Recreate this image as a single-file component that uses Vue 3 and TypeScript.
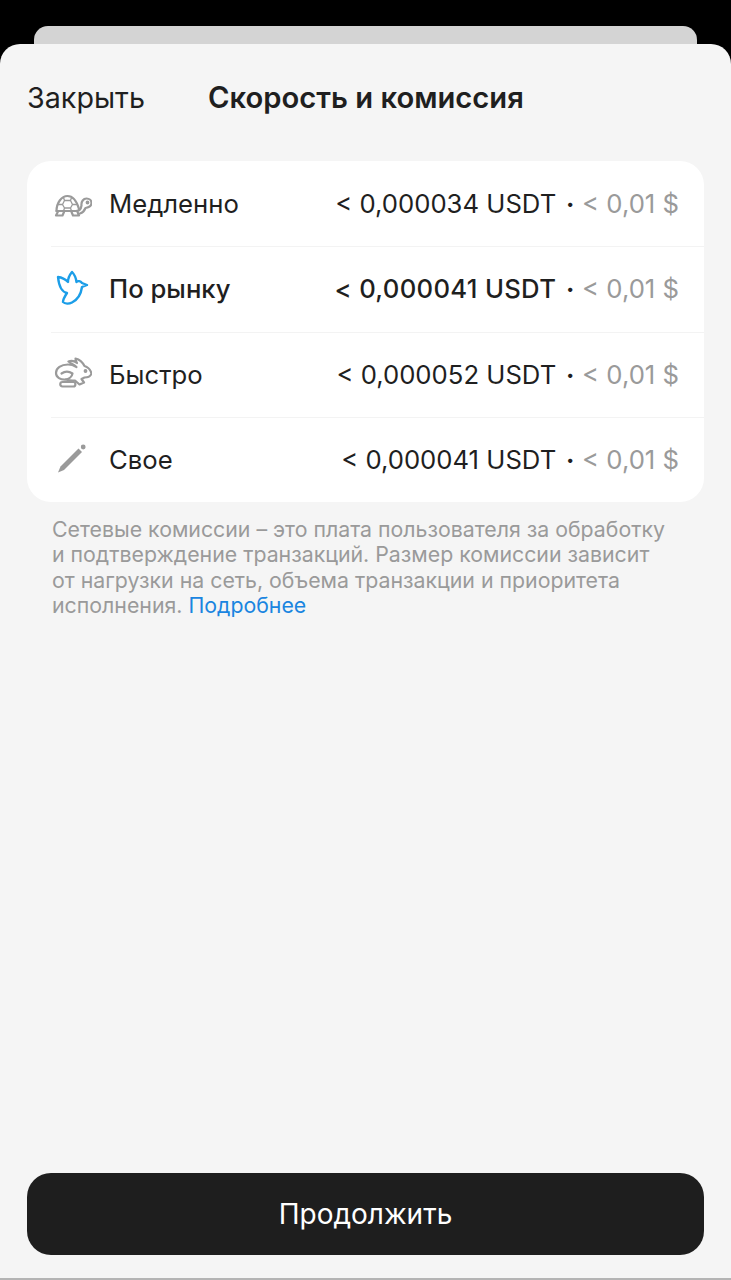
<script setup lang="ts">
type SpeedRow = {
	name: string;
	fee: string;
	icon: 'turtle' | 'bird' | 'rabbit' | 'pencil';
	active?: boolean;
};

const rows: SpeedRow[] = [
	{ name: 'Медленно', fee: '< 0,000034 USDT', icon: 'turtle' },
	{ name: 'По рынку', fee: '< 0,000041 USDT', icon: 'bird', active: true },
	{ name: 'Быстро', fee: '< 0,000052 USDT', icon: 'rabbit' },
	{ name: 'Свое', fee: '< 0,000041 USDT', icon: 'pencil' },
];
</script>

<template>
	<div class="screen">
		<div class="backCard" />
		<main class="sheet">
			<header class="header">
				<span class="close">Закрыть</span>
				<h1 class="title">Скорость и комиссия</h1>
			</header>

			<section class="card">
				<div v-for="row in rows" :key="row.name" class="row" :class="{ active: row.active }">
					<svg class="icon" viewBox="0 0 40 40" fill="none" stroke="#9a9a9a" stroke-width="2.200" stroke-linecap="round" stroke-linejoin="round">
						<template v-if="row.icon === 'turtle'">
							<path d="M4.500 27C4.500 19 9.500 12 15.500 12C21 12 25 18 27 25" />
							<path d="M4.500 27H24C27 27 29 25 29.500 21.500C29 17.500 31.500 14.500 34.500 14.500C37.500 14.500 39.500 16.500 39.500 19C39.500 22 36.500 23.500 33.500 24C32.500 26.500 31 28.500 28 29.500" />
							<path d="M10.500 20.500L12.500 16.500H18.500L20.500 20.500L18.500 24H12.500ZM12.500 16.500L11.500 13.500M18.500 16.500L19.500 13.500M10.500 20.500H6M20.500 20.500H25M12.500 24L11.500 27M18.500 24L19.500 27" stroke-width="1.300" />
							<path d="M6 27.500L4 31.500H10.500L12 28M19.500 28L21 31.500H27L25.500 28" />
							<circle cx="35.500" cy="18.500" r=".8" fill="#9a9a9a" />
						</template>
						<template v-else-if="row.icon === 'bird'">
							<path
								d="M11 33C11 30 13 27 15 24C10 23 7 18 6 8C10 8.500 13 10 16 13C16 9 17.500 6 20 3C22.500 5.500 24 9 24.500 13C26 11.500 28.500 12 30 14L35 16L30 18C29 25 25 31 20 33.500C17 35 13 35 11 33Z"
								stroke="#1c9ee8"
								stroke-width="2.400"
							/>
						</template>
						<template v-else-if="row.icon === 'rabbit'">
							<path d="M4 19C4 14 9 10.500 16 10.500C19 10.500 22 11.500 24.500 13C22 11 19 9.500 16.500 7.500C19 6.500 22.500 7 25 9C24 7.500 23.500 5.500 23.500 4.500C27.500 5.500 31 9 32.500 12C36 13 38.500 16 39.500 19.500C38.500 22.500 35.500 23.500 32.500 23.500L29.500 25L32 28.500L27.500 30.500L23 26.500C20 27 17 26.500 14 25.500" />
							<path d="M4 19C4 23.500 8.500 26 14 25.500C17 25 20 22.500 20.500 19.500C16.500 17 12.500 17.500 9.500 19.500" />
							<path d="M10.500 28H21.500C24 28 24 32.500 21.500 32.500H10.500C7.500 32.500 7.500 28 10.500 28Z" />
							<circle cx="33.500" cy="17" r=".8" fill="#9a9a9a" />
						</template>
						<template v-else>
							<path d="M6 33.500L8.500 27.500L26.500 9.500L30 13L12 31Z" fill="#9a9a9a" stroke="none" />
							<circle cx="31.200" cy="8" r="2.400" fill="#9a9a9a" stroke="none" />
						</template>
					</svg>
					<span class="name">{{ row.name }}</span>
					<span class="fee">{{ row.fee }}</span>
					<span class="dot">•</span>
					<span class="usd">&lt; 0,01 $</span>
				</div>
			</section>

			<p class="note">
				Сетевые комиссии – это плата пользователя за обработку<br />
				и подтверждение транзакций. Размер комиссии зависит<br />
				от нагрузки на сеть, объема транзакции и приоритета<br />
				исполнения. <a class="more">Подробнее</a>
			</p>

			<button class="continue">Продолжить</button>
		</main>
	</div>
</template>

<style scoped>
.screen {
	display: flex;
	flex-direction: column;
	box-sizing: border-box;
	height: 1280px;
	padding-top: 26px;
	overflow: hidden;
	background: #000;
	font-family: Inter, 'Noto Sans', sans-serif;
	color: #1f1f1f;
}
.backCard {
	flex: none;
	height: 18px;
	margin: 0 34px;
	border-radius: 14px 14px 0 0;
	background: #d4d4d4;
}
.sheet {
	display: flex;
	flex: 1;
	flex-direction: column;
	box-sizing: border-box;
	padding: 0 27px 23px;
	border-radius: 20px 20px 0 0;
	border-bottom: 2px solid #b4b4b4;
	background: #f5f5f5;
}
.header {
	display: flex;
	align-items: center;
	height: 107px;
	margin-bottom: 10px;
}
.close {
	width: 181px;
	font-size: 28.700px;
}
.title {
	margin: 0;
	font-size: 29.200px;
	font-weight: 600;
}
.card {
	border-radius: 24px;
	background: #fff;
}
.row {
	display: flex;
	align-items: center;
	box-sizing: border-box;
	height: 85.250px;
	padding-right: 25px;
	padding-left: 25px;
	font-size: 25.700px;
}
.row + .row {
	position: relative;
}
.row + .row::before {
	content: '';
	position: absolute;
	top: 0;
	right: 0;
	left: 24px;
	height: 1px;
	background: #f3f3f3;
}
.icon {
	flex: none;
	width: 40px;
	height: 40px;
	margin-right: 17px;
}
.name {
	flex: 1;
}
.row.active .name {
	font-weight: 500;
}
.row.active .fee {
	font-weight: 500;
	letter-spacing: 0.300px;
}
.dot {
	margin: 0 8px 0 10px;
	font-size: 14px;
}
.usd {
	color: #9a9a9a;
}
.note {
	margin: 15px 25px 0;
	font-size: 21.300px;
	line-height: 25.300px;
	color: #9a9a9a;
}
.more {
	color: #1a85e0;
}
.continue {
	height: 82px;
	margin-top: auto;
	border: 0;
	border-radius: 24px;
	background: #1e1e1e;
	font: inherit;
	font-size: 28px;
	color: #fff;
}
</style>
